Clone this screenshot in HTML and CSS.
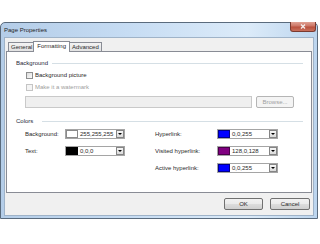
FILE: index.html
```html
<!doctype html>
<html>
<head>
  <meta charset="utf-8">
  <title>Page Properties</title>
  <link rel="stylesheet" href="styles.css">
</head>
<body>

  <div class="window">
    <div class="titlebar">
      <span class="title">Page Properties</span>
      <span class="close">
        <svg width="6" height="5" viewBox="0 0 6 5"><path d="M1 0.5 L5 4.5 M5 0.5 L1 4.5" stroke="#f4eeee" stroke-width="1.4"/></svg>
      </span>
    </div>

    <div class="client">
      <div class="tabs">
        <span class="tab">General</span>
        <span class="tab selected">Formatting</span>
        <span class="tab">Advanced</span>
      </div>

      <div class="panel">
        <div class="group-title">Background</div>
        <div class="check"><span class="box"></span>Background picture</div>
        <div class="check disabled"><span class="box"></span>Make it a watermark</div>
        <div class="file-row">
          <span class="textbox"></span>
          <span class="button disabled browse">Browse...</span>
        </div>

        <div class="group-title wide">Colors</div>
        <div class="colors">
          <div class="col left">
            <div class="row">
              <span class="label">Background:</span>
              <span class="combo"><span class="swatch white"></span><span class="value">255,255,255</span><span class="drop"></span></span>
            </div>
            <div class="row">
              <span class="label">Text:</span>
              <span class="combo"><span class="swatch black"></span><span class="value">0,0,0</span><span class="drop"></span></span>
            </div>
          </div>
          <div class="col right">
            <div class="row">
              <span class="label">Hyperlink:</span>
              <span class="combo"><span class="swatch blue"></span><span class="value">0,0,255</span><span class="drop"></span></span>
            </div>
            <div class="row">
              <span class="label">Visited hyperlink:</span>
              <span class="combo"><span class="swatch purple"></span><span class="value">128,0,128</span><span class="drop"></span></span>
            </div>
            <div class="row">
              <span class="label">Active hyperlink:</span>
              <span class="combo"><span class="swatch blue"></span><span class="value">0,0,255</span><span class="drop"></span></span>
            </div>
          </div>
        </div>
      </div>

      <div class="footer">
        <span class="button ok">OK</span>
        <span class="button cancel">Cancel</span>
      </div>
    </div>
  </div>

</body>
</html>
```

FILE: styles.css
```css
body {
  margin: 0;
  background: #fff;
  font: 6px/8px "Liberation Sans", Arial, sans-serif;
  color: #2a2a2a;
}

.window {
  margin-top: 22px;
  width: 318px;
  height: 197px;
  box-sizing: border-box;
  border: 1px solid #5a6b7d;
  border-radius: 5px 5px 0 0;
  padding: 0 3px 2px;
  background: linear-gradient(to right, #b4cde8, #c6dcf3 40%, #dcebf9 78%, #bcd5ee);
  display: flex;
  flex-direction: column;
}

.titlebar {
  height: 14px;
  display: flex;
  justify-content: space-between;
  align-items: flex-start;
}

.title {
  padding-top: 3px;
  color: #1e1e1e;
}

.close {
  width: 26px;
  height: 10px;
  margin: -1px -2px 0 0;
  box-sizing: border-box;
  border: 1px solid #7a3a30;
  border-top: none;
  border-radius: 0 0 3px 3px;
  background: linear-gradient(#e0a294, #cc7565 45%, #b9503d 55%, #c9705c);
  display: flex;
  align-items: center;
  justify-content: center;
}

.client {
  flex: 1;
  background: #f0f0f0;
  border: 1px solid #9fb3c8;
  padding: 3px 1px 0;
  display: flex;
  flex-direction: column;
}

.tabs {
  height: 10px;
  display: flex;
  align-items: flex-end;
  padding-left: 2px;
}

.tab {
  height: 9px;
  box-sizing: border-box;
  padding: 0 2px;
  border: 1px solid #898c95;
  border-bottom: none;
  margin-right: -1px;
  background: linear-gradient(#f3f3f3, #e2e2e2);
  line-height: 8px;
}

.tab.selected {
  height: 11px;
  margin: 0 -1px -1px -1px;
  padding: 0 3px;
  background: #fff;
  position: relative;
  z-index: 1;
  line-height: 9px;
}

.panel {
  height: 142px;
  box-sizing: border-box;
  border: 1px solid #898c95;
  background: #fff;
  padding: 7px 8px 0 9px;
}

.group-title {
  height: 8px;
  display: flex;
  align-items: center;
  color: #1e2a3b;
}

.group-title::after {
  content: '';
  flex: 1;
  height: 1px;
  margin-left: 4px;
  background: #d5dfe5;
}

.group-title.wide::after {
  margin-left: 9px;
}

.check {
  height: 8px;
  margin: 4px 0 0 10px;
  display: flex;
  align-items: center;
  gap: 2px;
}

.check .box {
  width: 7px;
  height: 7px;
  box-sizing: border-box;
  border: 1px solid #8e8f8f;
  background: linear-gradient(135deg, #dcdcdc, #fbfbfb);
}

.check.disabled {
  color: #a0a0a0;
}

.check.disabled .box {
  border-color: #c5c5c5;
  background: #f4f4f4;
}

.file-row {
  margin: 5px 0 0 9px;
  display: flex;
  gap: 4px;
}

.textbox {
  width: 227px;
  height: 12px;
  box-sizing: border-box;
  border: 1px solid #c9c9c9;
  background: #efefef;
}

.button {
  height: 12px;
  box-sizing: border-box;
  border: 1px solid #707070;
  border-radius: 2px;
  background: linear-gradient(#f2f2f2, #ebebeb 45%, #dddddd 50%, #cfcfcf);
  display: flex;
  align-items: center;
  justify-content: center;
}

.button.disabled {
  border-color: #b5b5b5;
  background: #f4f4f4;
  color: #a0a0a0;
}

.browse {
  width: 38px;
}

.group-title.wide {
  margin-top: 9px;
}

.colors {
  margin: 4px 0 0 9px;
  display: flex;
  gap: 30px;
}

.col {
  display: flex;
  flex-direction: column;
  gap: 7px;
}

.row {
  height: 10px;
  display: flex;
  align-items: center;
}

.left .label {
  width: 40px;
}

.right .label {
  width: 62px;
}

.combo {
  width: 60px;
  height: 10px;
  box-sizing: border-box;
  border: 1px solid #a5a5a5;
  background: #fff;
  display: flex;
  align-items: center;
}

.right .combo {
  width: 61px;
}

.swatch {
  width: 12px;
  height: 8px;
  box-sizing: border-box;
  border: 1px solid #8a8a8a;
}

.swatch.white { background: #fff; }
.swatch.black { background: #000; border-color: #000; }
.swatch.blue { background: #0000ff; border-color: #00008a; }
.swatch.purple { background: #800080; border-color: #4a004a; }

.value {
  flex: 1;
  margin-left: 2px;
}

.drop {
  width: 8px;
  height: 8px;
  box-sizing: border-box;
  border: 1px solid #858585;
  background: linear-gradient(#f6f6f6, #dadada);
  display: flex;
  align-items: center;
  justify-content: center;
}

.drop::after {
  content: '';
  border: 2px solid transparent;
  border-top: 2px solid #000;
  border-bottom: none;
}

.footer {
  flex: 1;
  display: flex;
  justify-content: flex-end;
  align-items: flex-start;
  gap: 7px;
  padding: 5px 2px 0 0;
}

.ok {
  width: 39px;
}

.cancel {
  width: 40px;
}
```
